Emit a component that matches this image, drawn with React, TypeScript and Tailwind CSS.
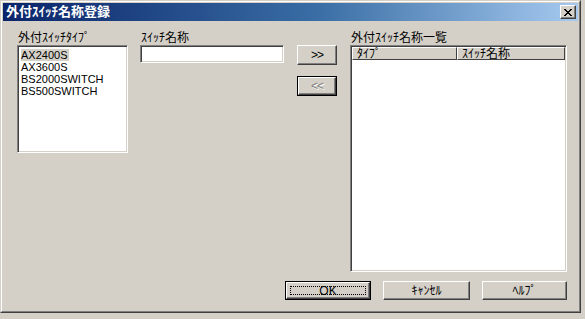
import React from "react";

const FONT = { fontFamily: '"Liberation Sans", "Noto Sans CJK JP", sans-serif' };

function Raised({ children, className = "" }: { children?: React.ReactNode; className?: string }) {
  return (
    <div
      className={
        "flex items-center justify-center bg-[#d4d0c8] border border-t-white border-l-white border-r-[#404040] border-b-[#404040] shadow-[inset_-1px_-1px_0_#808080] " +
        className
      }
    >
      {children}
    </div>
  );
}

export default function App() {
  return (
    <div className="w-[585px] h-[319px] bg-[#d4d0c8] overflow-hidden text-black" style={FONT}>
      <div className="w-[581px] h-[313px] border border-t-[#d4d0c8] border-l-[#d4d0c8] border-r-[#404040] border-b-[#404040]">
        <div className="w-full h-full border border-t-white border-l-white border-r-[#808080] border-b-[#808080] p-[1px] flex flex-col">
          {/* Title bar */}
          <div className="h-[18px] flex items-center bg-[linear-gradient(to_right,#0a246a,#3a6ea5_55%,#a6caf0)] pl-[3px]">
            <span className="text-white font-bold text-[13px] leading-[18px] flex-1">外付ｽｲｯﾁ名称登録</span>
            <div className="w-[16px] h-[14px] mr-[2px] flex items-center justify-center bg-[#d4d0c8] border border-t-white border-l-white border-r-[#404040] border-b-[#404040] shadow-[inset_-1px_-1px_0_#808080]">
              <svg width="8" height="7" viewBox="0 0 8 7">
                <path d="M0 0h2v1h1v1h2V1h1V0h2v1H7v1H6v1H5v1h1v1h1v1h1v1H6V6H5V5H3v1H2v1H0V6h1V5h1V4h1V3H2V2H1V1H0z" fill="#000" />
              </svg>
            </div>
          </div>
          {/* Content */}
          <div className="flex-1 flex flex-col pl-[14px] pr-[11px] pt-[10px]">
            <div className="flex items-start h-[240px]">
              {/* Left column */}
              <div className="w-[111px] flex flex-col">
                <div className="h-[14px] text-[12px] leading-[14px] pl-[1px]">外付ｽｲｯﾁﾀｲﾌﾟ</div>
                <div className="h-[108px] bg-white border border-t-[#808080] border-l-[#808080] border-r-white border-b-white shadow-[inset_1px_1px_0_#404040,inset_-1px_-1px_0_#d4d0c8] pt-[3px] pl-[3px] text-[11px] leading-[12px]">
                  <div><span className="bg-[#d4d0c8] pr-[2px]">AX2400S</span></div>
                  <div>AX3600S</div>
                  <div>BS2000SWITCH</div>
                  <div>BS500SWITCH</div>
                </div>
              </div>
              {/* Middle column */}
              <div className="w-[144px] ml-[12px] flex flex-col">
                <div className="h-[14px] text-[12px] leading-[14px] pl-[1px]">ｽｲｯﾁ名称</div>
                <div className="h-[18px] bg-white border border-t-[#808080] border-l-[#808080] border-r-white border-b-white shadow-[inset_1px_1px_0_#404040,inset_-1px_-1px_0_#d4d0c8]" />
              </div>
              {/* Arrow buttons */}
              <div className="w-[40px] ml-[13px] flex flex-col pt-[14px] gap-[11px]">
                <Raised className="h-[20px] text-[12px]">
                  <span className="tracking-[-1px]">&gt;&gt;</span>
                </Raised>
                <div className="h-[20px] border border-black">
                  <Raised className="h-full text-[12px] text-[#808080]">
                    <span className="tracking-[-1px] [text-shadow:1px_1px_0_#fff]">&lt;&lt;</span>
                  </Raised>
                </div>
              </div>
              {/* Right column */}
              <div className="w-[217px] ml-[13px] flex flex-col">
                <div className="h-[14px] text-[12px] leading-[14px] pl-[1px]">外付ｽｲｯﾁ名称一覧</div>
                <div className="h-[227px] bg-white border border-t-[#808080] border-l-[#808080] border-r-white border-b-white shadow-[inset_1px_1px_0_#404040,inset_-1px_-1px_0_#d4d0c8] p-[1px]">
                  <div className="flex h-[13px] text-[12px] leading-[12px]">
                    <div className="w-[105px] bg-[#d4d0c8] border border-t-white border-l-white border-r-[#404040] border-b-[#404040] pl-[4px]">ﾀｲﾌﾟ</div>
                    <div className="flex-1 bg-[#d4d0c8] border border-t-white border-l-white border-r-[#404040] border-b-[#404040] pl-[4px]">ｽｲｯﾁ名称</div>
                  </div>
                </div>
              </div>
            </div>
            {/* Bottom buttons */}
            <div className="flex justify-end mt-[10px] gap-[12px]">
              <div className="w-[86px] h-[19px] border border-black">
                <Raised className="h-full text-[12px] relative">
                  <span className="absolute inset-[3px] border border-dotted border-black" />
                  OK
                </Raised>
              </div>
              <Raised className="w-[87px] h-[19px] text-[12px]">ｷｬﾝｾﾙ</Raised>
              <Raised className="w-[85px] h-[19px] text-[12px]">ﾍﾙﾌﾟ</Raised>
            </div>
          </div>
        </div>
      </div>
    </div>
  );
}
